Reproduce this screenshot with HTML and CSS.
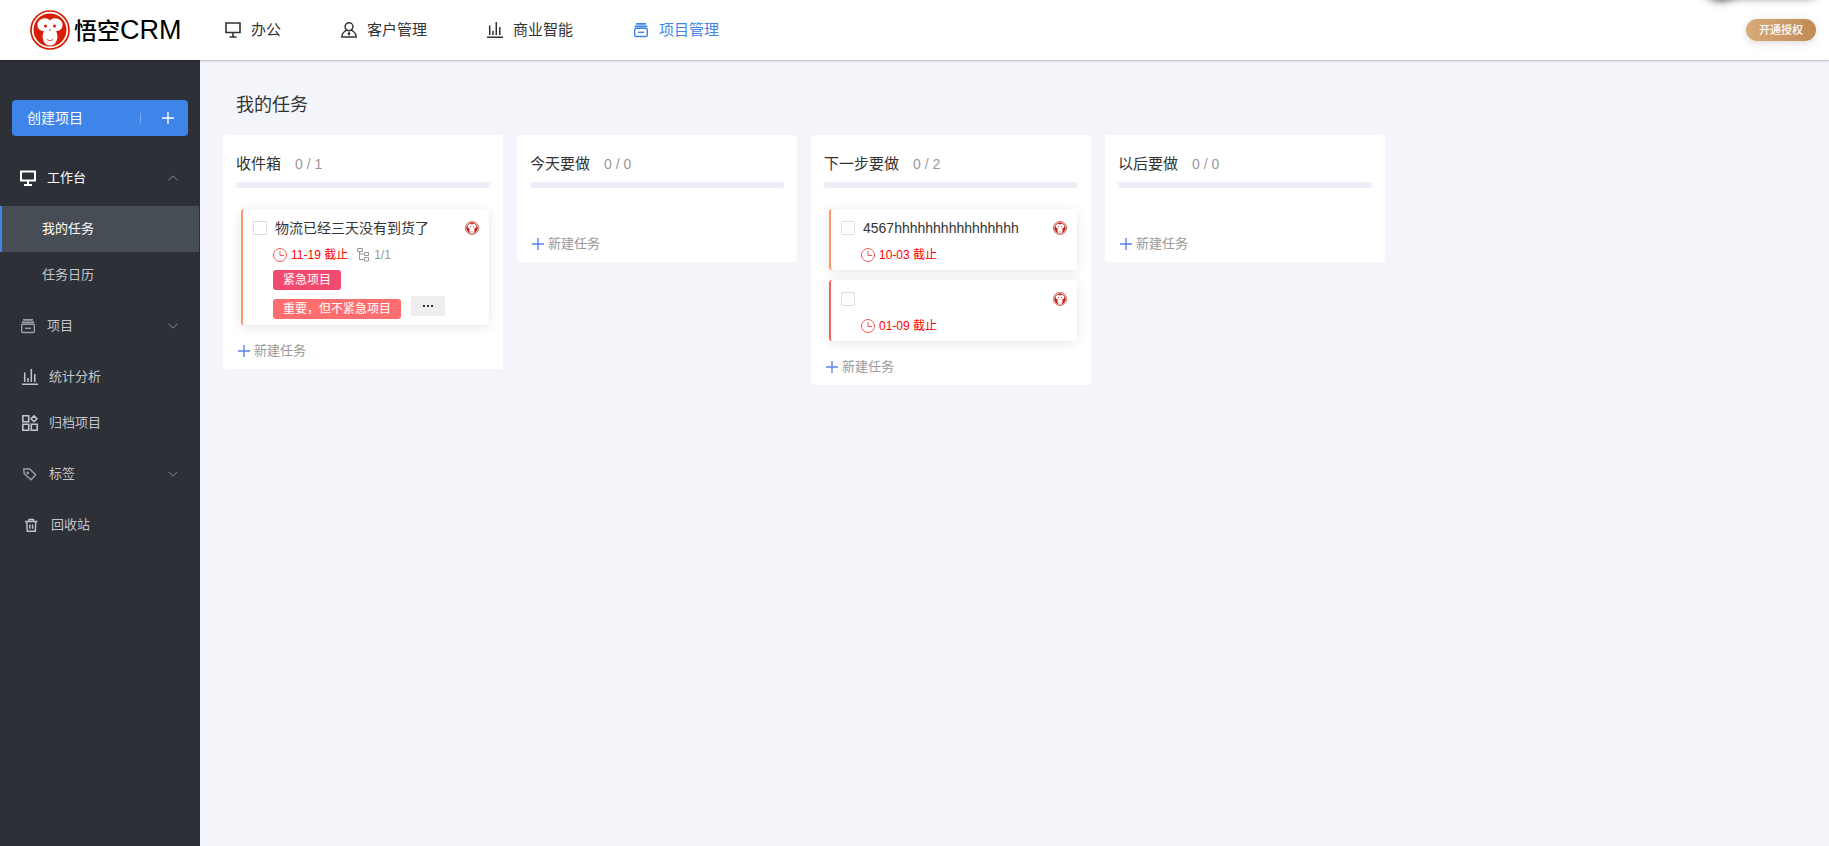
FILE: index.html
```html
<!DOCTYPE html>
<html lang="zh-CN">
<head>
<meta charset="utf-8">
<title>悟空CRM</title>
<link rel="stylesheet" href="styles.css">
</head>
<body>
<svg class="defs" aria-hidden="true">
  <symbol id="i-monitor" viewBox="0 0 16 16"><path d="M1 1h14v9.500H1zM8 10.500V15M4.500 15h7" fill="none" stroke="currentColor" stroke-width="1.600"/></symbol>
  <symbol id="i-monitor-bold" viewBox="0 0 16 16"><path d="M1 1.500h14v9H1zM8 10.500V15M4 15h8" fill="none" stroke="currentColor" stroke-width="2"/></symbol>
  <symbol id="i-user" viewBox="0 0 16 16"><path d="M8 .8c2.300 0 4 1.700 4 3.800 0 1.500-.7 2.500-1.700 3.300L13 10c1.300.9 2 2.200 2.200 5H.8C1 12.200 1.700 10.900 3 10l2.700-2.100C4.700 7.100 4 6.100 4 4.600 4 2.500 5.700.8 8 .8zM5.700 7.900C6.400 8.400 7.200 8.700 8 8.700s1.600-.3 2.300-.8" fill="none" stroke="currentColor" stroke-width="1.400"/><path d="M8 9.500l1.500 2L8 14l-1.500-2.500z" fill="currentColor"/></symbol>
  <symbol id="i-chart" viewBox="0 0 16 16"><path d="M0 15.200h16M2.700 3.500V13M6 9v4M9.300 0v13M12.800 5v8" fill="none" stroke="currentColor" stroke-width="1.500"/></symbol>
  <symbol id="i-project" viewBox="0 0 16 16"><path d="M3 1h10v1.700H3zM1.700 3.500h12.600v1.700H1.700z" fill="currentColor"/><rect x="1.700" y="6.200" width="12.600" height="8.300" rx="1.200" fill="none" stroke="currentColor" stroke-width="1.400"/><path d="M5 10.300h6" stroke="currentColor" stroke-width="1.400"/></symbol>
  <symbol id="i-grid" viewBox="0 0 16 16"><path d="M.8.8h5.900v5.900H.8zM.8 9.300h5.900v5.900H.8zM9.300 9.300h5.900v5.900H9.300zM12 .9l2.900 2.900L12 6.700 9.100 3.800z" fill="none" stroke="currentColor" stroke-width="1.600"/></symbol>
  <symbol id="i-tag" viewBox="0 0 16 16"><path d="M1.700 3h6l6 5.700-4.700 5-6.800-6z" fill="none" stroke="currentColor" stroke-width="1.500" stroke-linejoin="round"/><circle cx="5.700" cy="7" r="1.400" fill="currentColor"/></symbol>
  <symbol id="i-trash" viewBox="0 0 16 16"><path d="M1 4.500h12.500M5 4.500V2.500h4.500v2M2.800 4.500l.4 9.700h8.100l.4-9.700M5.900 7.500v4.200M8.600 7.500v4.200" fill="none" stroke="currentColor" stroke-width="1.400"/></symbol>
  <symbol id="i-chevron" viewBox="0 0 10 6"><path d="M.5.700L5 5.200 9.500.700" fill="none" stroke="currentColor"/></symbol>
  <symbol id="i-plus" viewBox="0 0 12 12"><path d="M0 6h12M6 0v12" fill="none" stroke="currentColor" stroke-width="1.400"/></symbol>
  <symbol id="i-clock" viewBox="0 0 14 14"><path d="M7 .5a6.500 6.500 0 1 1 0 13 6.500 6.500 0 0 1 0-13zM7 3v4.500h4" fill="none" stroke="currentColor"/></symbol>
  <symbol id="i-tree" viewBox="0 0 14 14"><path d="M1.500.500h5v3h-5zM3.500 3.500v8H8.500M3.500 6H8.500M8.500 4.500h4v3h-4zM8.500 9.500h4v3.500h-4z" fill="none" stroke="currentColor"/></symbol>
  <symbol id="i-monkey" viewBox="0 0 40 40"><circle cx="20" cy="20" r="19" fill="#fff" stroke="currentColor" stroke-width="1.700"/><circle cx="20" cy="20" r="16.500" fill="currentColor"/><path d="M20 10.500C22 8 25.500 7.500 28.500 9c3 1.500 4.500 4 4 7-.5 3.200-3 5-6.500 5.300 1.800 3 1.800 6.700.5 9.700-1.200 3-3.500 4.500-6.500 4.500s-5.300-1.500-6.500-4.500c-1.300-3-1.300-6.700.5-9.700-3.500-.3-6-2.100-6.500-5.300-.5-3 1-5.500 4-7 3-1.500 6.500-1 8.500 1.500z" fill="#fff"/><circle cx="15.500" cy="16" r="1.500" fill="currentColor"/><circle cx="24.500" cy="16" r="1.500" fill="currentColor"/><circle cx="20" cy="20" r=".8" fill="currentColor"/><path d="M16.800 29.500q3.200 2.800 6.400 0" fill="none" stroke="currentColor" stroke-width=".8"/></symbol>
</svg>

<header class="header">
  <a class="logo" href="#"><svg class="logo-mark"><use href="#i-monkey"/></svg><span class="logo-text">悟空<span class="logo-latin">CRM</span></span></a>
  <nav class="topnav">
    <a href="#"><svg class="icon"><use href="#i-monitor"/></svg>办公</a>
    <a href="#"><svg class="icon"><use href="#i-user"/></svg>客户管理</a>
    <a href="#"><svg class="icon"><use href="#i-chart"/></svg>商业智能</a>
    <a class="current" href="#"><svg class="icon"><use href="#i-project"/></svg>项目管理</a>
  </nav>
  <button class="license" type="button">开通授权</button>
  <span class="edge-shadow"></span>
</header>

<div class="layout">
  <aside class="sidebar">
    <button class="create" type="button">创建项目<span class="create-plus"><svg class="icon-plus"><use href="#i-plus"/></svg></span></button>
    <nav class="menu">
      <button class="item group open" type="button"><svg class="icon"><use href="#i-monitor-bold"/></svg>工作台<svg class="chevron"><use href="#i-chevron"/></svg></button>
      <a class="item sub active" href="#">我的任务</a>
      <a class="item sub" href="#">任务日历</a>
      <button class="item group" type="button"><svg class="icon dim"><use href="#i-project"/></svg>项目<svg class="chevron"><use href="#i-chevron"/></svg></button>
      <a class="item inset" href="#"><svg class="icon"><use href="#i-chart"/></svg>统计分析</a>
      <a class="item inset" href="#"><svg class="icon"><use href="#i-grid"/></svg>归档项目</a>
      <button class="item group inset" type="button"><svg class="icon dim"><use href="#i-tag"/></svg>标签<svg class="chevron"><use href="#i-chevron"/></svg></button>
      <a class="item deep" href="#"><svg class="icon"><use href="#i-trash"/></svg>回收站</a>
    </nav>
  </aside>

  <main class="main">
    <h1 class="title">我的任务</h1>
    <div class="board">
      <section class="column">
        <h2 class="column-head">收件箱<span class="count">0 / 1</span></h2>
        <div class="progress"></div>
        <div class="cards">
          <article class="card">
            <div class="card-top"><input id="t1" type="checkbox"><label for="t1">物流已经三天没有到货了</label><svg class="avatar"><use href="#i-monkey"/></svg></div>
            <div class="meta"><span class="due"><svg class="icon-small"><use href="#i-clock"/></svg>11-19 截止</span><span class="subtasks"><svg class="icon-small"><use href="#i-tree"/></svg>1/1</span></div>
            <div class="tags">
              <div class="tag-row"><span class="tag pink">紧急项目</span></div>
              <div class="tag-row wide"><span class="tag coral">重要，但不紧急项目</span><button class="more" type="button" aria-label="更多标签"><i></i><i></i><i></i></button></div>
            </div>
          </article>
        </div>
        <button class="add" type="button"><svg class="icon-plus"><use href="#i-plus"/></svg>新建任务</button>
      </section>

      <section class="column">
        <h2 class="column-head">今天要做<span class="count">0 / 0</span></h2>
        <div class="progress"></div>
        <div class="cards"></div>
        <button class="add" type="button"><svg class="icon-plus"><use href="#i-plus"/></svg>新建任务</button>
      </section>

      <section class="column">
        <h2 class="column-head">下一步要做<span class="count">0 / 2</span></h2>
        <div class="progress"></div>
        <div class="cards">
          <article class="card">
            <div class="card-top"><input id="t2" type="checkbox"><label for="t2">4567hhhhhhhhhhhhhhhh</label><svg class="avatar"><use href="#i-monkey"/></svg></div>
            <div class="meta"><span class="due"><svg class="icon-small"><use href="#i-clock"/></svg>10-03 截止</span></div>
          </article>
          <article class="card urgent">
            <div class="card-top"><input id="t3" type="checkbox"><label for="t3"></label><svg class="avatar"><use href="#i-monkey"/></svg></div>
            <div class="meta"><span class="due"><svg class="icon-small"><use href="#i-clock"/></svg>01-09 截止</span></div>
          </article>
        </div>
        <button class="add" type="button"><svg class="icon-plus"><use href="#i-plus"/></svg>新建任务</button>
      </section>

      <section class="column">
        <h2 class="column-head">以后要做<span class="count">0 / 0</span></h2>
        <div class="progress"></div>
        <div class="cards"></div>
        <button class="add" type="button"><svg class="icon-plus"><use href="#i-plus"/></svg>新建任务</button>
      </section>
    </div>
  </main>
</div>
</body>
</html>
```
FILE: styles.css
```css
* { box-sizing: border-box; }

body {
  margin: 0;
  min-height: 100vh;
  display: flex;
  flex-direction: column;
  background: #f4f5fa;
  color: #333;
  font: 14px/20px "Liberation Sans", "Noto Sans CJK SC", sans-serif;
}

a { color: inherit; text-decoration: none; }
button { border: 0; padding: 0; background: none; color: inherit; font: inherit; cursor: pointer; }
svg { flex: none; }

.defs { position: absolute; width: 0; height: 0; }
.icon { width: 16px; height: 16px; }
.icon-plus { width: 12px; height: 12px; }
.icon-small { width: 14px; height: 14px; }

/* Header */
.header {
  position: relative;
  z-index: 1;
  display: flex;
  align-items: center;
  height: 60px;
  padding: 0 13px 0 30px;
  background: #fff;
  box-shadow: 0 1px 2px rgba(0, 0, 0, .25);
}
.logo { display: flex; align-items: center; gap: 4px; width: 195px; color: #000; }
.logo-mark { width: 40px; height: 40px; color: #d81e06; }
.logo-text { font-size: 23px; line-height: 40px; font-weight: 500; white-space: nowrap; }
.logo-latin { font-size: 27px; }
.topnav { display: flex; gap: 60px; font-size: 15px; }
.topnav a { display: flex; align-items: center; gap: 10px; }
.topnav .current { color: #3e84e9; }
.license {
  margin: 0 0 0 auto;
  width: 70px;
  height: 22px;
  border-radius: 11px;
  background: linear-gradient(90deg, #d9ab7b, #c08a55);
  box-shadow: 0 2px 8px rgba(0, 0, 0, .15);
  color: #fff;
  font-size: 11px;
  font-weight: 500;
}
.edge-shadow {
  position: absolute;
  top: -24px;
  right: 10px;
  width: 100px;
  height: 20px;
  border-radius: 10px;
  box-shadow: 0 2px 8px rgba(0, 0, 0, .5);
}
.edge-shadow::before {
  content: "";
  position: absolute;
  top: -10px;
  left: -14px;
  width: 30px;
  height: 30px;
  border-radius: 50%;
  box-shadow: 0 2px 10px 2px rgba(0, 0, 0, .8);
}

/* Sidebar */
.layout { flex: 1; display: flex; }
.sidebar { flex: none; width: 200px; padding: 40px 1px 0 0; background: #2d3037; color: #c3c5ca; font-size: 13px; }
.create {
  display: flex;
  align-items: center;
  justify-content: space-between;
  width: 176px;
  height: 36px;
  margin: 0 0 14px 12px;
  padding: 0 14px 0 15px;
  border-radius: 4px;
  background: #3e84e9;
  color: #fff;
  font-size: 14px;
}
.create-plus { display: flex; align-items: center; height: 10px; padding-left: 21px; border-left: 1px solid #78a9f0; }
.menu { display: flex; flex-direction: column; }
.item { display: flex; align-items: center; gap: 11px; height: 46px; padding: 0 21px 0 20px; text-align: left; }
.group { height: 56px; }
.inset { padding-left: 22px; }
.deep { padding-left: 24px; }
.sub { padding-left: 40px; border-left: 2px solid transparent; }
.active { border-color: #3e84e9; background: #464d55; color: #fff; }
.open { color: #fff; }
.dim { color: #9b9da2; }
.chevron { width: 10px; height: 6px; margin-left: auto; color: #85878c; }
.open .chevron { transform: rotate(180deg); }

/* Board */
.main { flex: 1; min-width: 0; padding: 33px 23px; }
.title { margin: 0 0 18px 13px; font-size: 18px; line-height: 24px; font-weight: 400; }
.board { display: flex; align-items: flex-start; gap: 14px; }
.column { flex: 0 0 280px; padding: 0 13px; border-radius: 4px; background: #fff; }
.column-head { display: flex; align-items: center; gap: 14px; margin: 0 0 8px; padding-top: 19px; font-size: 15px; line-height: 20px; font-weight: 400; }
.count { color: #999; font-size: 14px; }
.progress { height: 6px; border-radius: 3px; background: #ebeef7; }
.cards { display: flex; flex-direction: column; gap: 10px; min-height: 38px; padding: 21px 1px 8px 5px; }
.card {
  padding: 9px 10px 6px;
  border-left: 2px solid #ff9668;
  border-radius: 3px;
  box-shadow: 0 2px 12px rgba(0, 0, 0, .1);
}
.urgent { border-color: #ed6363; }
.card-top { display: flex; align-items: center; gap: 8px; height: 20px; }
.card-top input { appearance: none; width: 14px; height: 14px; margin: 0; border: 1px solid #dcdcdc; border-radius: 2px; background: #fff; }
.card-top label { flex: 1; }
.avatar { width: 14px; height: 14px; color: #c0241c; }
.meta { display: flex; gap: 8px; height: 18px; margin: 8px 0 0 20px; font-size: 12px; line-height: 18px; }
.due, .subtasks { display: flex; align-items: center; gap: 4px; }
.due { color: #f00; }
.due svg { color: #f65a5a; }
.subtasks { color: #999; }
.tags { display: flex; flex-direction: column; gap: 6px; margin: 6px 0 0 20px; font-size: 12px; }
.tag-row { display: flex; align-items: flex-end; gap: 10px; height: 20px; }
.wide { height: 23px; }
.tag { padding: 0 10px; border-radius: 3px; color: #fff; }
.pink { background: #f34a70; }
.coral { background: #ff6e6e; }
.more { display: flex; align-items: center; justify-content: center; gap: 2px; align-self: flex-start; width: 34px; height: 20px; border-radius: 3px; background: #eee; }
.more i { width: 2px; height: 2px; background: #333; }
.add { display: flex; align-items: center; gap: 4px; height: 36px; padding-left: 2px; color: #999; font-size: 13px; }
.add svg { color: #5b83ea; }
```
